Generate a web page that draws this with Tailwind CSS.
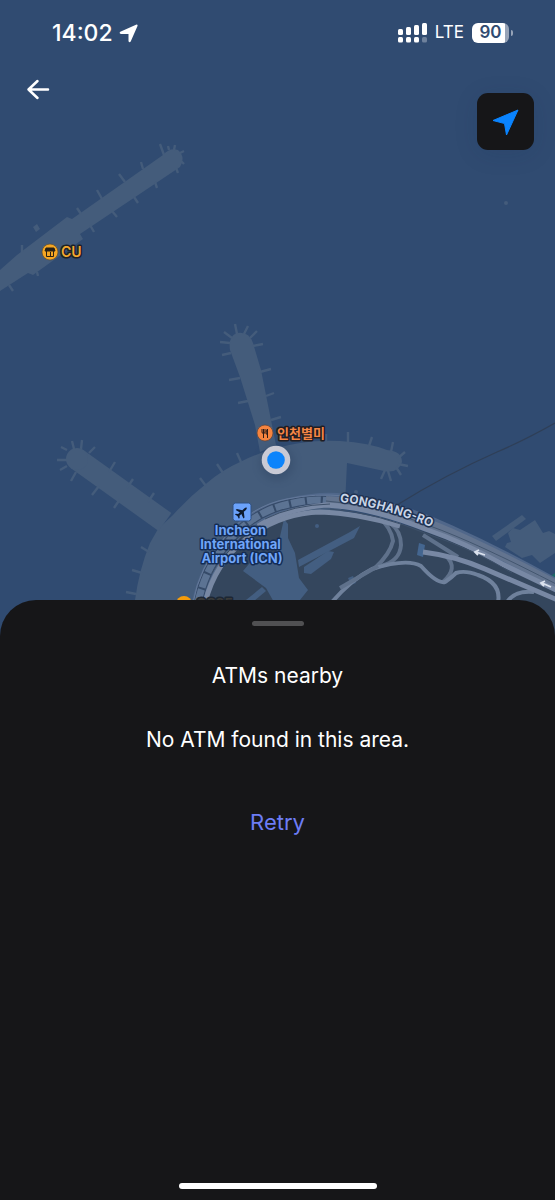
<!DOCTYPE html>
<html lang="en" class="bg-[#161618]">
<head>
  <meta charset="UTF-8">
  <title>ATMs nearby</title>
  <meta name="viewport" content="width=device-width,initial-scale=1.0">
  <script src="https://cdn.jsdelivr.net/npm/@tailwindcss/browser@4"></script>
</head>
<body class="font-['Inter','Noto_Sans_CJK_KR',sans-serif] text-white">
  <div class="flex min-h-screen flex-col overflow-hidden">

    <section class="relative h-[640px] bg-[#304b71]" aria-label="Map">
      <!-- Map -->
      <svg class="absolute inset-0 h-full w-full" viewBox="0 0 555 640" preserveAspectRatio="xMidYMin slice" fill="none">
        <!-- terminals -->
        <g fill="#445c7b">
          <path d="M0 270L17 255L67 217L72 219L163 155Q170 147 178 150Q186 157 180 167L80 234L83 239L33 275L28 273L0 291Z"/>
          <path d="M33 227L37 224L40 229L36 232Z"/>
          <path d="M230 350Q228 336 237 333Q249 331 253 343L261 370L276 445L260 452L255 425L240 377Z"/>
          <path d="M134 640L135 600Q139 570 150 543L158 529L173 515Q188 498 207 483Q222 470 240 462Q268 448 300 443Q318 440 340 441Q370 443 387 450Q402 451 402 462Q398 474 384 471L347 463L345 505L300 560L240 640Z"/>
          <circle cx="356" cy="492" r="2"/>
          <circle cx="506" cy="203" r="2"/>
          <path d="M492 536L522 515L526 519L496 541Z"/>
          <path d="M508 533L513 528L520 530L535 520L543 533L549 531L555 534V553L540 563L532 555L522 558L505 547L507 543L511 542Z"/>
        </g>
        <path d="M77 459L165 522" stroke="#445c7b" stroke-width="22" />
        <circle cx="77" cy="459" r="11" fill="#445c7b"/>
        <!-- jet bridges -->
        <path stroke="#445c7b" stroke-width="2.4" d="M164 155L160 144M143 169L141 162M125 182L119 174M102 199L97 190M81 214L77 208M155 182L157 188M134 197L138 203M112 211L117 217M90 225L94 232M9 285L13 291M169 150L168 146M174 150L175 145M180 153L184 151M181 161L184 164M176 168L178 173M22 252V245M37 272L38 276
          M74 449L72 441M81 449L82 440M89 453L95 447M109 472L115 462M127 488L133 479M148 502L154 493M67 450L61 447M67 460L57 460M67 466L60 470M76 472L71 481M99 486L92 495M120 499L114 508
          M149 552L141 547M142 573L132 570M136 594L126 592M206 486L200 478M223 473L217 464M241 462L237 453M326 442V434M348 443V432M369 446L372 437M391 452L393 442M397 459L405 452M398 464L408 466M396 467L401 475M388 471L391 481M385 470L381 479
          M237 334L235 324M244 334L248 326M250 338L257 331M253 346L263 344M260 372L271 369M266 396L274 393M271 420L281 417M232 338L224 332M230 343L220 342M231 353L222 355M240 378L229 380M248 401L238 403"/>
        <path d="M555 423Q525 440 497 452Q445 475 397 505" stroke="#2f3f57" stroke-width="1.3"/>
        <path d="M546 579L555 573V590Z" fill="#1c6866"/>

        <!-- land inside the loop road -->
        <path d="M202 640V603Q207 583 217 568Q232 538 266 521Q290 510 325 510Q375 513 420 530Q470 546 555 592V640Z" fill="#34465d"/>
        <g fill="#435e81">
          <path d="M284 519L288 524V538L295 553L299 578L308 590L300 600L275 604L266 588L243 571L254 558L276 554Z"/>
          <path d="M298 560L350 532L360 526L354 538L299 567Z"/>
          <path d="M304 567L328 551L334 552L331 559L311 574L304 573Z"/>
          <path d="M246 600L262 587L266 591L254 601Z"/>
          <path d="M419 543L425 545L423 557L417 555Z" fill="#446690"/>
          <path d="M348 578L353 576L356 583L351 585Z"/>
          <circle cx="317" cy="526" r="2"/>
        </g>
        <!-- outer loop lanes -->
        <path d="M198 603Q205 568 228 542Q254 511 289 504Q322 496 345 500Q400 507 450 531Q505 556 560 587" stroke="#50678a" stroke-width="12"/>
        <path d="M198 603Q205 568 228 542Q254 511 289 504Q315 498 328 501" stroke="#364b69" stroke-width="9"/>
        <path d="M198 603Q205 568 228 542Q254 511 289 504Q315 498 328 501" stroke="#5c7393" stroke-width="7" stroke-dasharray="14 2"/>
        <path d="M193 603Q199 568 224 538Q250 506 287 499Q315 493 345 496" stroke="#64799a" stroke-width="1"/>
        <!-- ramps -->
        <g stroke="#5f718b" stroke-width="4">
          <path d="M379 518Q391 527 393 541Q390 554 375 568"/>
          <path d="M390 523Q401 531 401 545Q400 561 381 566"/>
          <path d="M423 535L458 557M446 556Q459 568 443 582"/>
        </g>
        <g stroke="#6f819c" stroke-width="4">
          <path d="M332 602Q352 579 372 569Q407 558 421 566Q437 584 445 582Q451 578 456 573Q465 570 478 575Q502 583 498 603"/>
          <path d="M507 602Q515 590 534 592"/>
          <path d="M340 588L378 566" stroke="#5f718b"/>
        </g>
        <path d="M423 552Q455 556 485 569L560 601" stroke="#7888a4" stroke-width="5"/>
        <!-- main carriageways -->
        <path d="M205 603Q215 563 246 539Q280 513 320 512Q356 513 400 526" stroke="#7888a3" stroke-width="5"/>
        <path d="M326 500Q385 503 450 532Q500 554 560 586" stroke="#63748f" stroke-width="8"/>
        <path d="M258 526Q285 509 326 505Q370 507 428 530Q465 543 502 564L560 592" stroke="#7888a4" stroke-width="5"/>
        <path d="M326 501Q375 504 430 526Q475 542 560 586" stroke="#43566f" stroke-width="1"/>
        <path d="M330 509Q375 512 430 535Q475 550 512 573" stroke="#3d5069" stroke-width="1"/>
        <path d="M265 519Q293 505 330 504M212 573Q227 544 250 528" stroke="#3d5069" stroke-width="1"/>
        <!-- one-way arrows -->
        <path d="M485 555L476 552M479 550L475 552L478 555M551 587L542 583M545 581L541 583L544 586" stroke="#dbe2ee" stroke-width="1.8"/>

        <!-- street name -->
        <path id="gonghang" d="M340 502Q385 507 440 531"/>
        <text class="text-[12px] font-bold" fill="#c9d5e8" stroke="#1f3352" stroke-width="3" stroke-linejoin="round" paint-order="stroke"><textPath href="#gonghang">GONGHANG-RO</textPath></text>

        <!-- places -->
        <g stroke-linejoin="round" paint-order="stroke" stroke-width="3">
          <text x="61" y="257" class="text-[14px] font-semibold" fill="#f3a92f" stroke="#1d2127">CU</text>
          <text x="277" y="438" class="text-[13px] font-bold" fill="#f58644" stroke="#211d22">인천별미</text>
          <text x="196" y="609" class="text-[14px] font-semibold" fill="#3a3a38" stroke="#1d2734">GS25</text>
          <text text-anchor="middle" class="text-[13px] font-bold" fill="#70a5f8" stroke="#132c55">
            <tspan x="242" y="535">Incheon</tspan>
            <tspan x="242" y="549">International</tspan>
            <tspan x="242" y="563">Airport (ICN)</tspan>
          </text>
        </g>
        <circle cx="50" cy="252" r="8" fill="#f5a623" stroke="#5b4a30" stroke-width=".7"/>
        <path d="M46 248H54L55 251H45Z" fill="#2b2215" stroke="#2b2215" stroke-width="1"/>
        <path d="M46.500 251V256.500H53.500V251M50.500 252V256" stroke="#2b2215" stroke-width="1"/>
        <circle cx="184" cy="604" r="8" fill="#f59c0b"/>
        <circle cx="265" cy="433" r="8" fill="#f5843f" stroke="#5f4037" stroke-width=".7"/>
        <path d="M263.500 433V438M262 429V432Q262 433.500 263.500 433.500Q265 433.500 265 432V429M263.500 429V433M267.500 438V429Q266 430 266 434H267.500" stroke="#2b1c18" stroke-width="1"/>
        <rect x="233" y="503" width="18" height="18" rx="2.500" fill="#6ba2fb" stroke="#315180" stroke-width="1"/>
        <path transform="translate(242 512) rotate(48) scale(.72)" d="M0-9Q1.500-8 1.500-5V-2L8 2.500V4.500L1.500 2.500V6L4 8V9.500L0 8.500L-4 9.500V8L-1.500 6V2.500L-8 4.500V2.500L-1.500-2V-5Q-1.500-8 0-9Z" fill="#0d1a2e"/>

        <!-- current position -->
        <circle cx="277" cy="463" r="17" fill="#1f3350" opacity=".25" class="blur-[4px]"/>
        <circle cx="276" cy="460" r="14.300" fill="#c9cad5"/>
        <circle cx="276" cy="460" r="8.800" fill="#0d84fb"/>
      </svg>

      <!-- Status bar -->
      <div class="relative flex h-[66px] items-center justify-between pr-[42px] pl-[52px]">
        <div class="flex items-center gap-1.5">
          <span class="text-[23px] font-medium">14:02</span>
          <svg class="h-[19px] w-[19px]" viewBox="0 0 19 19" fill="#fff"><path d="M17 .7Q19 .3 18.500 2L11.700 17.500Q10.500 19 9.500 17.200V10H2Q-.3 9.300 1.300 7.800Z"/></svg>
        </div>
        <div class="flex items-center gap-2">
          <svg class="h-5 w-[29px]" viewBox="0 0 29 20" fill="#fff">
            <rect x="0" y="6" width="5" height="6" rx="1.500"/>
            <rect x="8" y="4" width="5" height="8" rx="1.500"/>
            <rect x="16" y="2" width="5" height="10" rx="1.500"/>
            <rect x="24" y="0" width="5" height="12" rx="1.500"/>
            <rect x="0" y="14" width="5" height="5.500" rx="1.500"/>
            <rect x="8" y="14" width="5" height="5.500" rx="1.500"/>
            <rect x="16" y="14" width="5" height="5.500" rx="1.500"/>
            <rect x="24" y="14" width="5" height="5.500" rx="1.500" opacity=".3"/>
          </svg>
          <span class="text-[17px]">LTE</span>
          <div class="flex items-center gap-0.5">
            <div class="flex h-5 w-[37px] items-center justify-center rounded-md bg-linear-to-r from-white from-90% to-[#96a3b7] to-90% text-[17px] font-semibold text-[#304b71]">90</div>
            <div class="h-1.5 w-0.5 rounded-r-full bg-[#96a3b7]"></div>
          </div>
        </div>
      </div>

      <!-- Map controls -->
      <div class="relative flex items-start justify-between pr-[21px] pl-6">
        <button type="button" aria-label="Back" class="mt-2.5 h-7 w-7">
          <svg class="h-7 w-7" viewBox="0 0 28 28" fill="none" stroke="#fff" stroke-width="2.500" stroke-linecap="round" stroke-linejoin="round"><path d="M13.500 5L4.500 13.500L13.500 22M4.500 13.500H24"/></svg>
        </button>
        <button type="button" aria-label="My location" class="mt-[27px] flex h-[57px] w-[57px] items-center justify-center rounded-[11px] bg-[#161618] shadow-[0_4px_24px_rgba(20,40,80,0.12)]">
          <svg class="h-7 w-7" viewBox="0 0 28 28" fill="#0a84ff" stroke="#0a84ff" stroke-linejoin="round"><path d="M26 2L1 12.500L12.500 15.500L14.500 27Z"/></svg>
        </button>
      </div>
    </section>

    <!-- Bottom sheet -->
    <main class="relative -mt-10 flex flex-1 flex-col items-center rounded-t-[36px] bg-[#161618] pt-[21px] text-center">
      <div class="h-[5px] w-[52px] rounded-full bg-[#505052]"></div>
      <h1 class="mt-9 text-[21px] leading-7">ATMs nearby</h1>
      <p class="mt-9 text-[21px] leading-7">No ATM found in this area.</p>
      <button type="button" class="mt-[54px] text-[22px] leading-7 text-[#6d7df5]">Retry</button>
      <div class="mt-auto mb-[11px] h-1.5 w-[198px] rounded-full bg-white"></div>
    </main>

  </div>
</body>
</html>
